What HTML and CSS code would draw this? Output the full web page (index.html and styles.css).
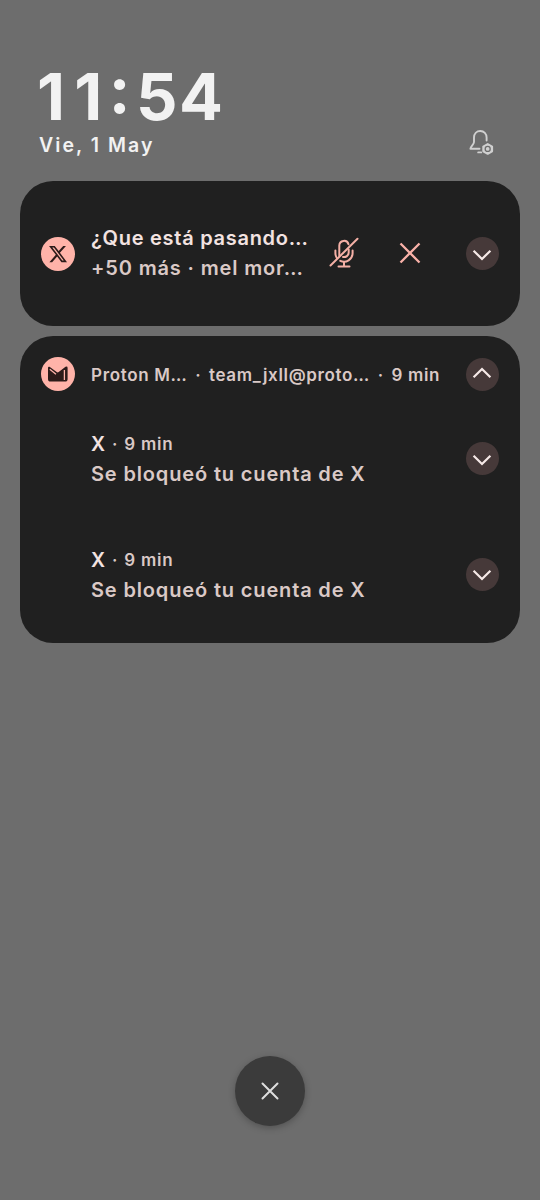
FILE: index.html
```html
<!DOCTYPE html>
<html lang="es">
<head>
<meta charset="utf-8">
<title>Notificaciones</title>
<link rel="stylesheet" href="styles.css">
</head>
<body>
<main class="shade">
  <header class="header">
    <div>
      <div class="clock"><span class="h1">1</span><span class="h2">1</span><span class="sep">:</span><span class="m1">5</span>4</div>
      <div class="date">Vie, 1 May</div>
    </div>
    <svg class="bell" viewBox="0 0 28 28" fill="none" stroke="#d0d0d0" stroke-width="1.9" stroke-linecap="round" stroke-linejoin="round">
      <path d="M19.600 12.600V9.600C19.600 5.800 17 3 13.300 3S7 5.800 7 9.600V14C7 16.500 3.400 18.600 3.400 20.800H12.500"/>
      <path d="M11.200 24.400H14.200"/>
      <path d="M20.700 16L25.100 18.500V23.300L20.700 25.800L16.300 23.300V18.500Z" stroke-width="2" fill="#d0d0d0"/>
      <circle cx="20.700" cy="20.900" r="2.500" stroke="#6d6d6d" stroke-width="1.300"/>
    </svg>
  </header>

  <section class="card card-x">
    <div class="avatar">
      <svg viewBox="0 0 24 24" width="20" height="20" fill="#2c1b19"><path d="M18.244 2.250h3.308l-7.227 8.260 8.502 11.240H16.170l-5.214-6.817L4.990 21.750H1.680l7.730-8.835L1.254 2.250H8.080l4.713 6.231zm-1.161 17.520h1.833L7.084 4.126H5.117z"/></svg>
    </div>
    <div class="body">
      <div class="line title">¿Que está pasando…</div>
      <div class="line text more">+50 más · mel mor…</div>
    </div>
    <svg class="mic" viewBox="0 0 32 32" fill="none" stroke="#f5b0a6" stroke-width="2" stroke-linecap="round">
      <path d="M11.300 19V8.500a4.700 4.700 0 0 1 9.200-1.300"/>
      <path d="M20.700 12.500V15.500a4.700 4.700 0 0 1-5.700 4.500"/>
      <path d="M7.400 13.500V16q0 3 1.400 5"/>
      <path d="M24.600 13.500V16a8.600 8.600 0 0 1-12.300 7.800"/>
      <path d="M16 25V29.500M10.500 29.500H21.500M2.500 28.500L29.500 1.800"/>
    </svg>
    <svg class="dismiss" viewBox="0 0 22 22" fill="none" stroke="#f9b1a8" stroke-width="2.300"><path d="M1.500 1.500L20.500 20.500M20.500 1.500L1.500 20.500"/></svg>
    <div class="toggle"><svg viewBox="0 0 20 12"><path d="M1.600 1.700L10 10L18.400 1.700"/></svg></div>
  </section>

  <section class="card card-mail">
    <div class="row head">
      <div class="avatar">
        <svg viewBox="0 0 20 16" width="20" height="16"><path d="M0 2Q0 .2 1.500 .8L8.700 6Q9.700 6.800 10.700 6L17.500 .8Q19.600 0 19.600 2V13Q19.600 15.600 17 15.600H2.600Q0 15.600 0 13Z" fill="#2c1b19"/><path d="M1.800 3.200L8 8.200M16.400 4V14" fill="none" stroke="#ffb3a9" stroke-width="1.300"/></svg>
      </div>
      <div class="meta">
        <span class="app">Proton M…</span><span class="dot">·</span><span class="account">team_jxll@proto…</span><span class="dot">·</span><span>9 min</span>
      </div>
      <div class="toggle up"><svg viewBox="0 0 20 12"><path d="M1.600 1.700L10 10L18.400 1.700"/></svg></div>
    </div>
    <div class="row item">
      <div class="body">
        <div class="line sender"><b>X</b><span class="dot">·</span><span class="time">9 min</span></div>
        <div class="line text subject">Se bloqueó tu cuenta de X</div>
      </div>
      <div class="toggle"><svg viewBox="0 0 20 12"><path d="M1.600 1.700L10 10L18.400 1.700"/></svg></div>
    </div>
    <div class="row item">
      <div class="body">
        <div class="line sender"><b>X</b><span class="dot">·</span><span class="time">9 min</span></div>
        <div class="line text subject">Se bloqueó tu cuenta de X</div>
      </div>
      <div class="toggle"><svg viewBox="0 0 20 12"><path d="M1.600 1.700L10 10L18.400 1.700"/></svg></div>
    </div>
  </section>

  <div class="clear">
    <svg viewBox="0 0 18 18" fill="none" stroke="#dedede" stroke-width="2" stroke-linecap="round"><path d="M1.500 1.500L16.500 16.500M16.500 1.500L1.500 16.500"/></svg>
  </div>
</main>
</body>
</html>
```
FILE: styles.css
```css
* { box-sizing: border-box; }
body { margin: 0; background: #6d6d6d; font-family: Inter, Roboto, sans-serif; }
svg { display: block; flex: none; }
.shade { height: 1200px; padding: 61px 20px 0; display: flex; flex-direction: column; }
.header { height: 120px; padding: 0 25px 0 19px; display: flex; justify-content: space-between; flex: none; }
.clock { height: 72px; margin-left: -2px; font-size: 65px; line-height: 71px; font-weight: 650; color: #f2f2f2; white-space: nowrap; font-feature-settings: "case"; }
.h1 { letter-spacing: 9.300px; }
.h2 { letter-spacing: 6.500px; }
.sep { letter-spacing: 5.300px; }
.m1 { letter-spacing: 1.500px; }
.date { font-size: 19.500px; line-height: 24px; font-weight: 600; color: #f2f2f2; letter-spacing: 2.050px; white-space: nowrap; }
.bell { width: 28px; height: 28px; margin-top: 67px; }
.card { background: #202020; border-radius: 33px; flex: none; }
.card-x { height: 145px; display: flex; align-items: center; padding: 0 21.500px 0 21px; }
.card-mail { height: 307px; margin-top: 10px; padding: 21px 21.500px 0 21px; }
.avatar { width: 34px; height: 34px; border-radius: 50%; background: #ffb3a9; display: flex; align-items: center; justify-content: center; flex: none; }
.body { margin-left: 16px; flex: 1; }
.line { height: 30px; line-height: 30px; font-size: 20px; white-space: nowrap; }
.card-x .body { width: 223px; flex: none; margin-bottom: 2px; }
.title { color: #f3e3e1; font-weight: 600; letter-spacing: .72px; }
.text { color: #dac9c6; font-weight: 600; letter-spacing: .85px; }
.mic { width: 32px; height: 32px; margin: 0 0 1px 14px; }
.dismiss { width: 22px; height: 22px; margin: 0 0 1px 38.500px; }
.toggle { width: 33px; height: 33px; border-radius: 50%; background: #463939; margin-left: auto; display: flex; align-items: center; justify-content: center; padding-top: 2px; flex: none; }
.toggle svg { width: 20px; height: 12px; fill: none; stroke: #f6e9e7; stroke-width: 2.200; }
.toggle.up svg { transform: rotate(180deg); }
.toggle.up { padding: 0 0 3px; }
.row { display: flex; align-items: center; }
.head { height: 34px; }
.meta { margin-left: 16px; padding-top: 2px; display: flex; white-space: nowrap; font-size: 17px; line-height: 34px; font-weight: 600; color: #dac9c6; letter-spacing: .66px; }
.dot { width: 21.500px; text-align: center; }
.item { height: 60px; margin-top: 38px; padding-left: 34px; }
.item + .item { margin-top: 55.500px; }
.item .toggle { margin-bottom: 1px; }
.sender { display: flex; font-size: 17px; line-height: 31px; color: #dac9c6; font-weight: 600; letter-spacing: .75px; }
.sender b { font-size: 19.500px; font-weight: 600; color: #f3e3e1; }
.sender .dot { width: 18.500px; }
.clear { width: 70px; height: 70px; border-radius: 50%; background: #3b3b3b; margin: auto auto 74.500px; display: flex; align-items: center; justify-content: center; box-shadow: 0 2px 7px rgba(0, 0, 0, .25); }
.clear svg { width: 18px; height: 18px; }
```
